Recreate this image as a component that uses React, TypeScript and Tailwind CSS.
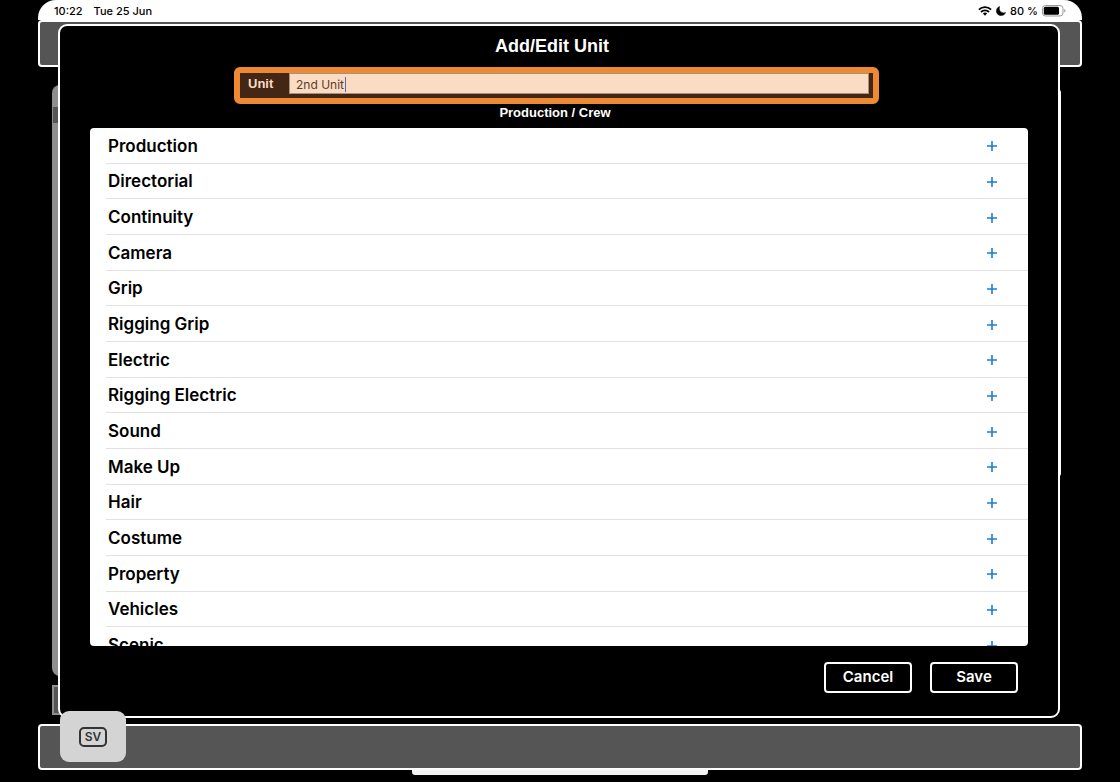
import React, { useState } from 'react';

const departments = [
  'Production',
  'Directorial',
  'Continuity',
  'Camera',
  'Grip',
  'Rigging Grip',
  'Electric',
  'Rigging Electric',
  'Sound',
  'Make Up',
  'Hair',
  'Costume',
  'Property',
  'Vehicles',
  'Scenic',
];

const StatusBar = () => (
  <header className="flex h-5 shrink-0 items-center justify-between rounded-t-[18px] bg-white px-4 text-[11px] font-medium text-black">
    <div className="flex gap-[11px] pt-[2px]">
      <span>10:22</span>
      <span>Tue 25 Jun</span>
    </div>
    <div className="flex items-center gap-1 pt-[2px]">
      <svg width="14" height="10" viewBox="0 0 14 10" fill="none" stroke="black" strokeWidth="1.8">
        <path d="M0.9 3.7a8.7 8.7 0 0 1 12.2 0" />
        <path d="M3 6a5.6 5.6 0 0 1 8 0" />
        <path d="M7 9.8L4.9 7.6a3 3 0 0 1 4.2 0z" fill="black" stroke="none" />
      </svg>
      <svg width="10" height="10" viewBox="0 0 10 10">
        <path d="M3.6 0.4C1.6 1.2 0.4 3 0.4 5C0.4 7.7 2.5 9.6 5.1 9.6C7.2 9.6 8.9 8.4 9.6 6.6C6 7.8 2.2 5 3.6 0.4z" fill="black" stroke="black" strokeWidth="0.5" />
      </svg>
      <span>80 %</span>
      <svg width="24" height="12" viewBox="0 0 24 12">
        <rect x="0.5" y="0.5" width="20.5" height="10.5" rx="3" fill="none" stroke="#999" />
        <rect x="1.8" y="1.8" width="15.2" height="7.9" rx="1.5" fill="black" />
        <path d="M22.2 4v3.6q1.3-.5 1.3-1.8T22.2 4z" fill="#999" />
      </svg>
    </div>
  </header>
);

const App = () => {
  const [unit, setUnit] = useState('2nd Unit');

  return (
    <div className="h-screen overflow-hidden bg-black px-[38px] font-['Inter','Liberation_Sans',sans-serif]">
      <div className="relative flex h-full flex-col">
        <StatusBar />

        {/* Page behind the dialog */}
        <div className="h-[47px] shrink-0 rounded-[4px] border-2 border-white bg-[#555]" />
        <div className="flex flex-1 flex-col pl-[14px] pr-[21px] pt-[18px]">
          <div className="flex flex-1 justify-between">
            <div className="w-10 rounded-[8px] bg-[#8e8e8e] pl-px pt-[22px]">
              <div className="h-4 bg-[#555]" />
            </div>
            <div className="mt-1 h-[388px] w-10 rounded-[4px] bg-white" />
          </div>
          <div className="my-[9px] h-[30px] w-10 border-2 border-[#8e8e8e] bg-[#555]" />
        </div>
        <div className="h-[46px] shrink-0 rounded-[4px] border-2 border-white bg-[#555]" />
        <div className="mx-auto mb-[7px] h-[5px] w-[296px] shrink-0 rounded-b-[3px] bg-[#f2f2f2]" />

        {/* Dialog */}
        <div
          role="dialog"
          aria-labelledby="dialog-title"
          className="absolute bottom-16 left-5 right-[22px] top-6 flex flex-col rounded-[9px] border-2 border-white bg-black px-[30px]"
        >
          <h1
            id="dialog-title"
            className="pr-[14px] pt-2 text-center font-['Liberation_Sans',Arial,sans-serif] text-lg leading-6 font-bold text-white"
          >
            Add/Edit Unit
          </h1>
          <div className="ml-36 mr-[149px] mt-[9px] flex h-[37px] shrink-0 items-start rounded-[6px] border-[6px] border-[#ed8a33] bg-[#432613] pr-1">
            <label
              htmlFor="unit"
              className="w-[49px] shrink-0 pl-2 font-['Liberation_Sans',Arial,sans-serif] text-[13px] leading-[22px] font-bold text-[#fadcc5]"
            >
              Unit
            </label>
            <div className="relative flex h-[21px] flex-1 items-center border border-[#a98f7c] bg-[#fadcc5] pl-[6px]">
              <input
                id="unit"
                type="text"
                value={unit}
                onChange={(e: React.ChangeEvent<HTMLInputElement>) => setUnit(e.target.value)}
                className="w-full bg-transparent pt-[3px] text-xs text-[#5a3d2b] outline-none"
              />
              <span className="absolute bottom-px left-[55px] top-[3px] w-px bg-[#5f66b8]" />
            </div>
          </div>
          <h2 className="pr-2 text-center font-['Liberation_Sans',Arial,sans-serif] text-[13px] leading-[18px] font-bold text-white">
            Production / Crew
          </h2>

          <div className="mt-[6px] min-h-0 flex-1 overflow-hidden rounded-[4px] bg-white">
            <ul className="grid h-[535px] auto-rows-fr pl-4">
              {departments.map((name) => (
                <li
                  key={name}
                  className="flex items-center justify-between border-b border-[#e2e2e2] pl-[2px] pr-[30px] pt-[2px]"
                >
                  <span className="text-[17px] font-semibold text-black">{name}</span>
                  <button type="button" aria-label={`Add ${name}`}>
                    <svg width="12" height="12" viewBox="0 0 12 12" stroke="#1c7ed6" strokeWidth="1.6">
                      <path d="M6 1v10M1 6h10" />
                    </svg>
                  </button>
                </li>
              ))}
            </ul>
          </div>

          <div className="mb-[23px] mr-[10px] mt-4 flex shrink-0 justify-end gap-[18px] text-[15px] font-semibold text-white">
            <button type="button" className="h-[31px] w-[88px] rounded-[4px] border-2 border-white">
              Cancel
            </button>
            <button type="button" className="h-[31px] w-[88px] rounded-[4px] border-2 border-white">
              Save
            </button>
          </div>
        </div>

        {/* Keyboard language key */}
        <button
          type="button"
          className="absolute bottom-5 left-[22px] flex h-[51px] w-[66px] items-center justify-center rounded-[9px] bg-[#d4d4d4]"
        >
          <span className="flex h-5 w-7 items-center justify-center rounded-[5px] border-2 border-[#333] text-xs font-semibold text-[#333]">
            SV
          </span>
        </button>
      </div>
    </div>
  );
};

export default App;
